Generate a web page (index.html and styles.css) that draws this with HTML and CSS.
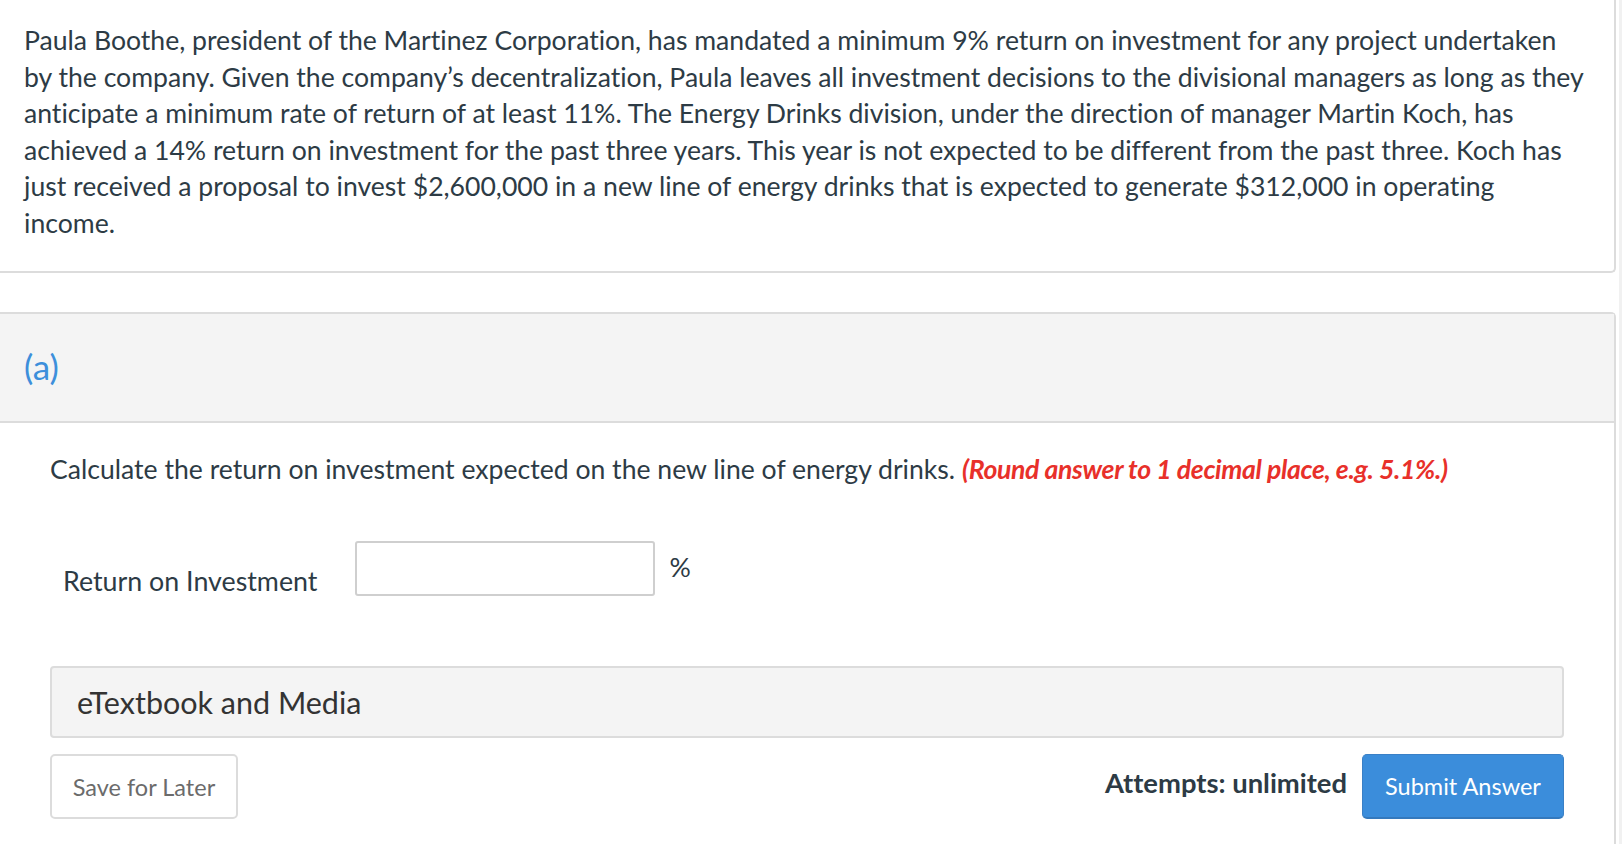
FILE: index.html
```html
<!DOCTYPE html>
<html>
<head>
<meta charset="utf-8">
<link rel="stylesheet" href="styles.css">
</head>
<body>
<div class="page">
  <section class="card intro">
    <p class="question">Paula Boothe, president of the Martinez Corporation, has mandated a minimum 9% return on investment for any project undertaken by the company. Given the company’s decentralization, Paula leaves all investment decisions to the divisional managers as long as they anticipate a minimum rate of return of at least 11%. The Energy Drinks division, under the direction of manager Martin Koch, has achieved a 14% return on investment for the past three years. This year is not expected to be different from the past three. Koch has just received a proposal to invest $2,600,000 in a new line of energy drinks that is expected to generate $312,000 in operating income.</p>
  </section>
  <section class="card part">
    <header class="part-head">(a)</header>
    <div class="part-body">
      <p class="prompt">Calculate the return on investment expected on the new line of energy drinks. <em class="hint">(Round answer to 1 decimal place, e.g. 5.1%.)</em></p>
      <div class="answer-row">
        <span class="label">Return on Investment</span>
        <input class="answer" type="text">
        <span class="unit">%</span>
      </div>
      <div class="media">eTextbook and Media</div>
      <div class="actions">
        <button class="btn save">Save for Later</button>
        <div class="right">
          <span class="attempts">Attempts: unlimited</span>
          <button class="btn submit">Submit Answer</button>
        </div>
      </div>
    </div>
  </section>
</div>
</body>
</html>
```
FILE: styles.css
```css
html, body {
  margin: 0;
  padding: 0;
}
body {
  background: #f1f1f1;
  font-family: Lato, "Open Sans", sans-serif;
  font-variant-ligatures: none;
  color: #2d3b45;
  height: 844px;
  overflow: hidden;
}
.page {
  width: 1619px;
  background: #fff;
  height: 844px;
}
.card {
  width: 1616px;
  background: #fff;
  border-right: 2px solid #dcdcdc;
  box-sizing: border-box;
}
.intro {
  border-bottom: 2px solid #dcdcdc;
  border-bottom-right-radius: 5px;
  padding: 22px 27px 25px 24px;
  height: 273px;
}
.question {
  margin: 0;
  font-size: 26.6px;
  line-height: 36.6px;
}
.part {
  margin-top: 39px;
  border-top: 2px solid #dcdcdc;
  border-top-right-radius: 5px;
  height: 533px;
}
.part-head {
  background: #f4f4f4;
  border-bottom: 2px solid #dcdcdc;
  box-sizing: content-box;
  display: flex;
  align-items: center;
  padding-left: 24px;
  padding-bottom: 3px;
  height: 104px;
  font-size: 35px;
  color: #3d8fdb;
}
.part-body {
  padding: 0 50px 0 50px;
}
.prompt {
  margin: 29px 0 0 0;
  font-size: 26.6px;
  line-height: 34px;
}
.hint {
  color: #e8302a;
  font-weight: bold;
  font-style: italic;
  letter-spacing: -0.35px;
}
.answer-row {
  display: flex;
  align-items: flex-end;
  margin-top: 55px;
  padding-left: 13px;
}
.label {
  font-size: 26.8px;
  line-height: 30px;
  margin-bottom: 0;
}
.answer {
  width: 300px;
  height: 55px;
  box-sizing: border-box;
  border: 2px solid #cfcfcf;
  border-radius: 3px;
  margin-left: 38px;
  background: #fff;
}
.unit {
  align-self: flex-start;
  font-size: 26.6px;
  margin-left: 14px;
  margin-top: 10px;
}
.media {
  margin-top: 70px;
  background: #f4f4f4;
  border: 2px solid #dcdcdc;
  border-radius: 4px;
  height: 72px;
  box-sizing: border-box;
  display: flex;
  align-items: center;
  padding-left: 25px;
  font-size: 30.5px;
  color: #333;
}
.actions {
  display: flex;
  justify-content: space-between;
  align-items: center;
  margin-top: 16px;
}
.btn {
  font-family: Lato, "Open Sans", sans-serif;
  font-variant-ligatures: none;
  height: 65px;
  border-radius: 5px;
  font-size: 23.5px;
  cursor: pointer;
}
.save {
  width: 188px;
  background: #fff;
  border: 2px solid #dcdcdc;
  color: #6b6b6b;
}
.right {
  display: flex;
  align-items: center;
  gap: 15px;
}
.attempts {
  font-size: 27.4px;
  font-weight: bold;
  color: #2d3b45;
  margin-top: -8px;
}
.submit {
  width: 202px;
  background: #3b8ddb;
  border: 1px solid #3a80c6;
  border-bottom: 2px solid #3479bd;
  color: #fff;
}
```
